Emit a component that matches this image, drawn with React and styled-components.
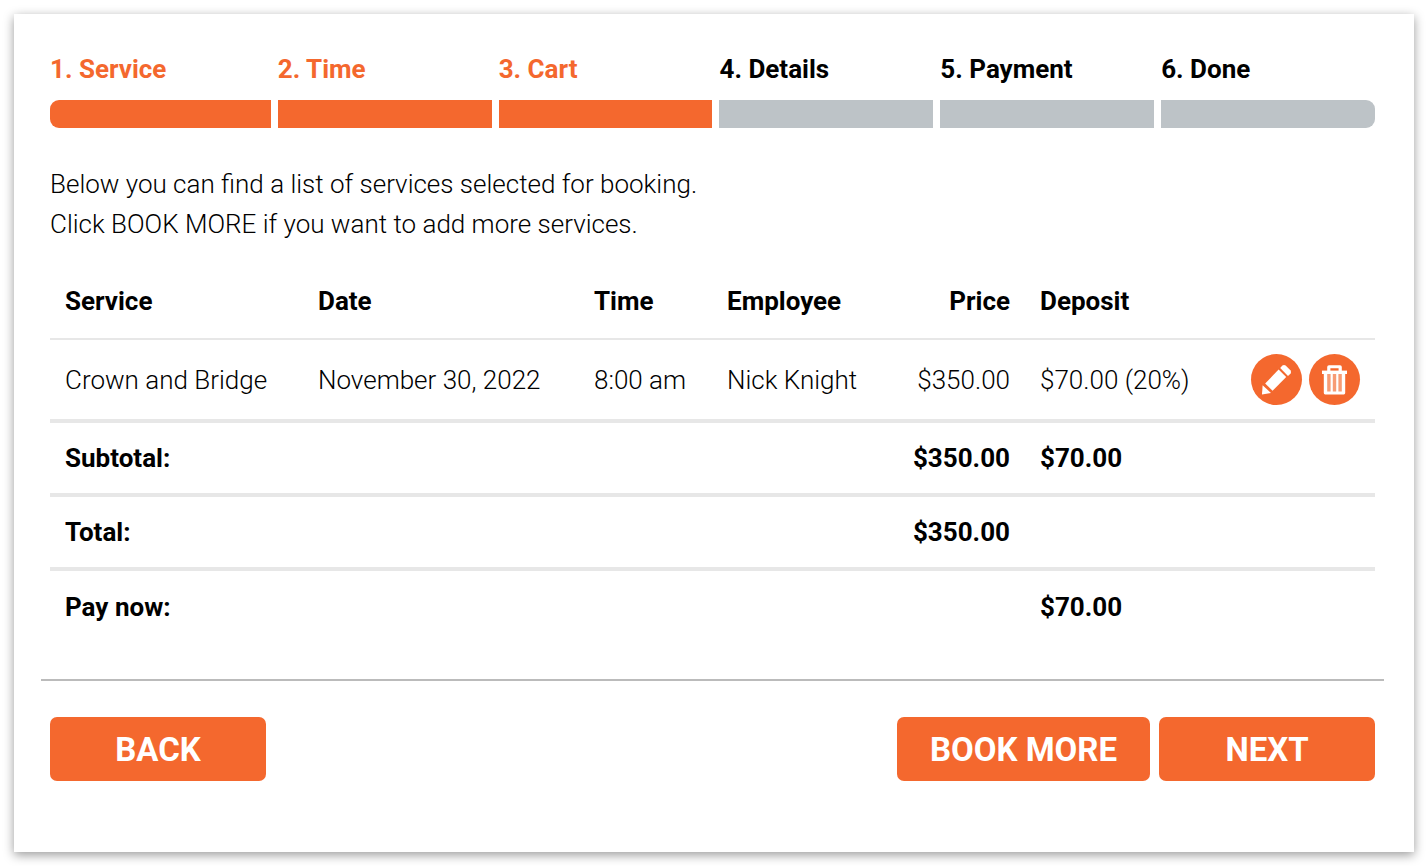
import React from "react";
import styled, { createGlobalStyle } from "styled-components";

const GlobalStyle = createGlobalStyle`
  * {
    box-sizing: border-box;
  }

  body {
    margin: 0;
    background-color: #fff;
    color: #000;
    font-family: Roboto, "Liberation Sans", sans-serif;
    font-size: 26px;
    font-weight: 300;
    line-height: 40px;
  }
`;

const Card = styled.main`
  margin: 14px;
  padding: 35px 30px 71px 27px;
  background-color: #fff;
  box-shadow: 0 3px 10px rgba(0, 0, 0, 0.4);
`;

const Content = styled.div`
  padding: 0 9px;
`;

const Steps = styled.ol`
  display: grid;
  grid-template-columns: repeat(6, 1fr);
  margin: 0;
  padding: 0;
  list-style: none;
`;

const Step = styled.li`
  padding-left: 7px;
  color: ${(props) => (props.$active ? "#f4682e" : "#000")};
  font-weight: 700;

  &:first-child {
    padding-left: 0;
  }
`;

const StepBar = styled.div`
  height: 28px;
  margin-top: 11px;
  background-color: ${(props) => (props.$active ? "#f4682e" : "#bdc3c7")};

  ${Step}:first-child & {
    border-radius: 9px 0 0 9px;
  }

  ${Step}:last-child & {
    border-radius: 0 9px 9px 0;
  }
`;

const Intro = styled.p`
  margin: 36px 0 20px;
`;

const Table = styled.table`
  width: 100%;
  table-layout: fixed;
  border-collapse: collapse;
`;

const Col = styled.col`
  width: ${(props) => props.$width}px;
`;

const Row = styled.tr`
  height: ${(props) => props.$height || 74}px;
  border-bottom: ${(props) => props.$line || 0}px solid #e7e7e7;
`;

const Head = styled.th`
  padding: 0 15px;
  font-weight: 700;
  text-align: ${(props) => props.$align || "left"};
`;

const Cell = styled.td`
  padding: 0 15px;
  font-weight: ${(props) => (props.$bold ? 700 : 300)};
  text-align: ${(props) => props.$align || "left"};
  white-space: nowrap;
`;

const Actions = styled.div`
  display: flex;
  justify-content: flex-end;
  gap: 7px;
`;

const IconButton = styled.button`
  width: 51px;
  height: 51px;
  padding: 0;
  border: none;
  border-radius: 50%;
  background-color: #f4682e;
  color: #fff;
  cursor: pointer;

  svg {
    display: block;
  }
`;

const Footer = styled.div`
  display: flex;
  gap: 9px;
  margin-top: 36px;
  padding: 36px 9px 0;
  border-top: 2px solid #bbb;
`;

const Button = styled.button`
  min-width: 216px;
  height: 64px;
  padding: 0 33px;
  border: none;
  border-radius: 7px;
  background-color: #f4682e;
  color: #fff;
  font-family: inherit;
  font-size: 33px;
  font-weight: 700;
  text-transform: uppercase;
  cursor: pointer;
`;

const BackButton = styled(Button)`
  margin-right: auto;
`;

const PencilIcon = () => (
  <svg width="51" height="51" viewBox="0 0 51 51" fill="#fff">
    <path d="M11 40.5 11.6 31.2 20 38.9Z" />
    <path d="M14.2 29.4 27.6 15.6 35.2 23 21.6 36.8Z" />
    <path d="M29.2 14 31.4 11.6Q33 10.4 34.6 11.6L39.4 16.2Q40.6 18 39.6 19.4L37 22Z" />
  </svg>
);

const TrashIcon = () => (
  <svg width="51" height="51" viewBox="0 0 51 51" fill="#fff">
    <path
      fillRule="evenodd"
      d="M18.2 17V13Q18.2 11.2 20 11.2H31Q32.8 11.2 32.8 13V17ZM21.4 14.2V17H29.6V14.2Z"
    />
    <path d="M13 16.6H38V20H13Z" />
    <path d="M14.8 19H36.2V39Q36.2 40.4 34.8 40.4H16.2Q14.8 40.4 14.8 39Z" />
    <path fill="#f79c75" d="M18.2 20H21.6V37.4H18.2ZM23.8 20H27.2V37.4H23.8ZM29.4 20H32.8V37.4H29.4Z" />
  </svg>
);

const steps = ["Service", "Time", "Cart", "Details", "Payment", "Done"];
const currentStep = 3;

const columns = [253, 276, 133, 158, 155, 177, 173];

const App = () => {
  return (
    <>
      <GlobalStyle />
      <Card>
        <Content>
          <Steps>
            {steps.map((step, i) => (
              <Step key={step} $active={i < currentStep}>
                {i + 1}. {step}
                <StepBar $active={i < currentStep} />
              </Step>
            ))}
          </Steps>
          <Intro>
            Below you can find a list of services selected for booking.
            <br />
            Click BOOK MORE if you want to add more services.
          </Intro>
          <Table>
            <colgroup>
              {columns.map((width, i) => (
                <Col key={i} $width={width} />
              ))}
            </colgroup>
            <thead>
              <Row $height={75} $line={2}>
                <Head>Service</Head>
                <Head>Date</Head>
                <Head>Time</Head>
                <Head>Employee</Head>
                <Head $align="right">Price</Head>
                <Head>Deposit</Head>
                <Cell />
              </Row>
            </thead>
            <tbody>
              <Row $height={82} $line={4}>
                <Cell>Crown and Bridge</Cell>
                <Cell>November 30, 2022</Cell>
                <Cell>8:00 am</Cell>
                <Cell>Nick Knight</Cell>
                <Cell $align="right">$350.00</Cell>
                <Cell>$70.00 (20%)</Cell>
                <Cell>
                  <Actions>
                    <IconButton type="button" aria-label="Edit">
                      <PencilIcon />
                    </IconButton>
                    <IconButton type="button" aria-label="Delete">
                      <TrashIcon />
                    </IconButton>
                  </Actions>
                </Cell>
              </Row>
            </tbody>
            <tfoot>
              <Row $line={4}>
                <Head colSpan={4}>Subtotal:</Head>
                <Cell $bold $align="right">$350.00</Cell>
                <Cell $bold>$70.00</Cell>
                <Cell />
              </Row>
              <Row $line={4}>
                <Head colSpan={4}>Total:</Head>
                <Cell $bold $align="right">$350.00</Cell>
                <Cell />
                <Cell />
              </Row>
              <Row>
                <Head colSpan={4}>Pay now:</Head>
                <Cell />
                <Cell $bold>$70.00</Cell>
                <Cell />
              </Row>
            </tfoot>
          </Table>
        </Content>
        <Footer>
          <BackButton type="button">Back</BackButton>
          <Button type="button">Book more</Button>
          <Button type="button">Next</Button>
        </Footer>
      </Card>
    </>
  );
};

export default App;
